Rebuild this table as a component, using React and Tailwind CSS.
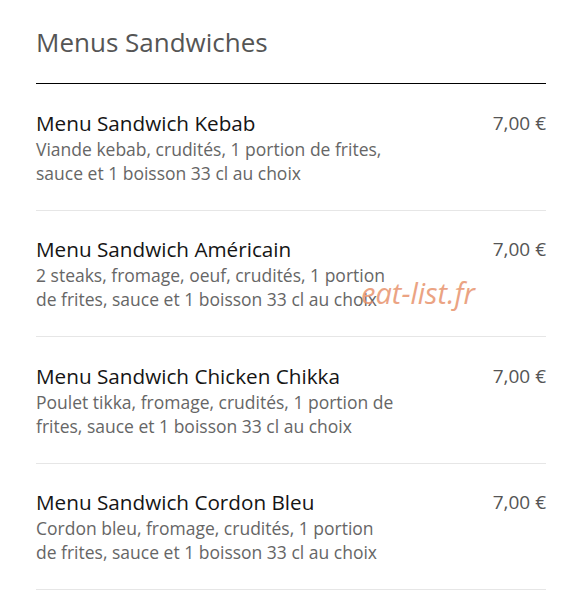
const items = [
  {
    name: 'Menu Sandwich Kebab',
    desc: 'Viande kebab, crudités, 1 portion de frites, sauce et 1 boisson 33 cl au choix',
    price: '7,00 €',
  },
  {
    name: 'Menu Sandwich Américain',
    desc: '2 steaks, fromage, oeuf, crudités, 1 portion de frites, sauce et 1 boisson 33 cl au choix',
    price: '7,00 €',
  },
  {
    name: 'Menu Sandwich Chicken Chikka',
    desc: 'Poulet tikka, fromage, crudités, 1 portion de frites, sauce et 1 boisson 33 cl au choix',
    price: '7,00 €',
  },
  {
    name: 'Menu Sandwich Cordon Bleu',
    desc: 'Cordon bleu, fromage, crudités, 1 portion de frites, sauce et 1 boisson 33 cl au choix',
    price: '7,00 €',
  },
];

const MenuItem = ({ item }) => (
  <div className="flex items-start justify-between pt-[25.5px] pb-[25px] border-b border-[#e6e6e6]">
    <div>
      <h3 className="text-[20.7px] leading-[27px] text-[#151515]">{item.name}</h3>
      <p className="w-[362px] text-[17.5px] leading-[24px] text-[#666]">{item.desc}</p>
    </div>
    <span className="text-[19px] leading-[27px] text-[#555]">{item.price}</span>
  </div>
);

export default function App() {
  return (
    <div className="relative min-h-[599px] bg-white font-['Open_Sans',sans-serif]">
      <div className="ml-[36px] w-[510px] pt-[24px]">
        <h2 className="text-[26px] leading-[36px] text-[#555] pb-[23px] border-b border-black">
          Menus Sandwiches
        </h2>
        {items.map((item) => (
          <MenuItem key={item.name} item={item} />
        ))}
      </div>
      {/* watermark */}
      <span className="absolute left-[361px] top-[273px] text-[29px] leading-[40px] italic text-[#e8946e] opacity-85 pointer-events-none">
        eat-list.fr
      </span>
    </div>
  );
}
